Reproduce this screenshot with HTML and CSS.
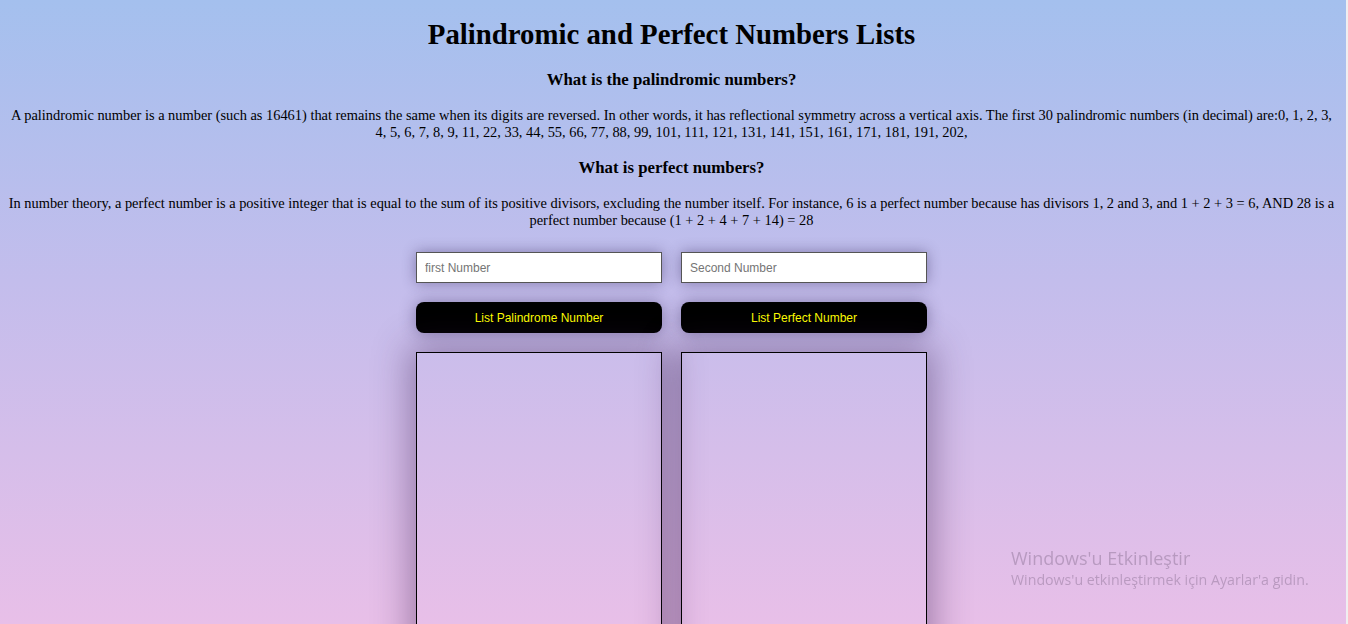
FILE: index.html
```html
<!DOCTYPE html>
<html lang="en">
<head>
<meta charset="utf-8">
<title>Palindromic and Perfect Numbers Lists</title>
<link rel="stylesheet" href="styles.css">
</head>
<body>
<div class="page">
  <h1 class="title">Palindromic and Perfect Numbers Lists</h1>
  <h3 class="subtitle">What is the palindromic numbers?</h3>
  <p class="text">A palindromic number is a number (such as 16461) that remains the same when its digits are reversed. In other words, it has reflectional symmetry across a vertical axis. The first 30 palindromic numbers (in decimal) are:0, 1, 2, 3, 4, 5, 6, 7, 8, 9, 11, 22, 33, 44, 55, 66, 77, 88, 99, 101, 111, 121, 131, 141, 151, 161, 171, 181, 191, 202,</p>
  <h3 class="subtitle">What is perfect numbers?</h3>
  <p class="text">In number theory, a perfect number is a positive integer that is equal to the sum of its positive divisors, excluding the number itself. For instance, 6 is a perfect number because has divisors 1, 2 and 3, and 1 + 2 + 3 = 6, AND 28 is a perfect number because (1 + 2 + 4 + 7 + 14) = 28</p>
  <div class="tool">
    <input class="field" type="text" placeholder="first Number">
    <input class="field" type="text" placeholder="Second Number">
    <button class="btn" type="button">List Palindrome Number</button>
    <button class="btn" type="button">List Perfect Number</button>
    <div class="result"></div>
    <div class="result"></div>
  </div>
</div>
<div class="scrollstrip"></div>
<div class="watermark">
  <div class="wm-title">Windows'u Etkinleştir</div>
  <div class="wm-sub">Windows'u etkinleştirmek için Ayarlar'a gidin.</div>
</div>
</body>
</html>
```
FILE: styles.css
```css
html, body {
  height: 100%;
}
body {
  margin: 0;
  overflow: hidden;
  background: linear-gradient(to bottom, #a4c0ee 0%, #c3bdec 45%, #e8bfe8 100%);
  font-family: "Liberation Serif", "Times New Roman", serif;
  color: #000;
  display: flex;
}
.page {
  flex: 1;
  padding: 0 9px 0 6px;
}
.title {
  font-size: 28.8px;
  font-weight: bold;
  text-align: center;
  margin: 18px 0 19px;
}
.subtitle {
  font-size: 16.8px;
  font-weight: bold;
  text-align: center;
  margin: 17px 0;
}
.text {
  font-size: 14.4px;
  text-align: center;
  margin: 17px 0;
}
.tool {
  display: grid;
  grid-template-columns: 246px 246px;
  column-gap: 19px;
  row-gap: 19px;
  justify-content: center;
  margin-top: 23px;
}
.field {
  box-sizing: border-box;
  height: 31px;
  width: 246px;
  margin: 0;
  padding: 0 8px;
  background: #fff;
  border: 1px solid #555;
  font-family: "Liberation Sans", Arial, sans-serif;
  font-size: 12px;
  color: #000;
  box-shadow: 0 0 14px rgba(40, 30, 80, 0.42);
  outline: none;
}
.field::placeholder {
  color: #757575;
}
.btn {
  height: 31px;
  width: 246px;
  margin: 0;
  background: #000;
  color: #ffff00;
  border: none;
  border-radius: 8px;
  font-family: "Liberation Sans", Arial, sans-serif;
  font-size: 12px;
  box-shadow: 0 0 16px rgba(40, 30, 80, 0.42);
}
.result {
  box-sizing: border-box;
  width: 246px;
  height: 320px;
  border: 1px solid #000;
  background: transparent;
  box-shadow: 0 0 34px 6px rgba(60, 30, 80, 0.42);
}
.scrollstrip {
  width: 2px;
  background: #f0eef0;
  flex: none;
}
.watermark {
  position: fixed;
  left: 1011px;
  top: 546px;
  font-family: "Open Sans", "Noto Sans", sans-serif;
  color: rgba(90, 70, 100, 0.3);
}
.wm-title {
  font-size: 18px;
  line-height: 24px;
}
.wm-sub {
  font-size: 14.2px;
  line-height: 20px;
}
```
